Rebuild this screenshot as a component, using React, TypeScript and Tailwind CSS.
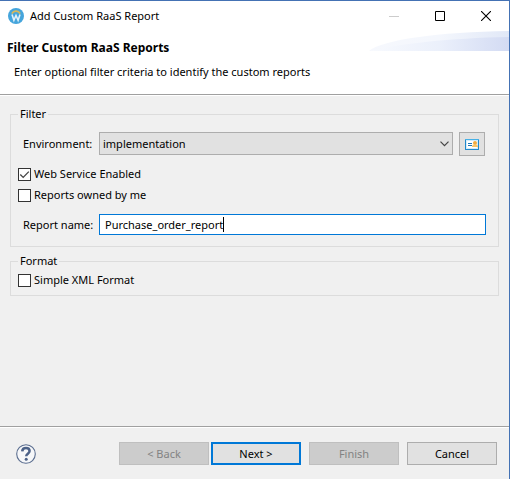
import React, { useState } from 'react'

function AppIcon() {
  return (
    <svg className="size-4" viewBox="0 0 16 16" aria-hidden="true">
      <circle cx="8" cy="8" r="8" fill="#45a5dc" />
      <path d="M3.900 5.600a4.600 4.600 0 0 1 8.200 0" fill="none" stroke="#d9b95c" strokeWidth="1.600" />
      <path d="M4 6.600l1.900 5.600L8 7.400l2.100 4.800L12 6.600" fill="none" stroke="#e4f2fa" strokeWidth="1.600" />
    </svg>
  )
}

function HeaderSwoosh() {
  return (
    <svg className="absolute right-0 top-0 h-5 w-[140px]" viewBox="0 0 140 20" preserveAspectRatio="none" aria-hidden="true">
      <defs>
        <linearGradient id="outer" x1="0" x2="1">
          <stop offset="0" stopColor="#f6f8fd" />
          <stop offset="0.5" stopColor="#f4f7fd" />
          <stop offset="1" stopColor="#e1e8f7" />
        </linearGradient>
        <linearGradient id="inner" x1="0" x2="1">
          <stop offset="0" stopColor="#f8fafe" />
          <stop offset="0.5" stopColor="#ebf0fb" />
          <stop offset="1" stopColor="#d3dbf3" />
        </linearGradient>
      </defs>
      <path d="M0 20C12 9 70 1 140 0v20z" fill="url(#outer)" />
      <path d="M0 20C30 13 80 7 140 6v14z" fill="url(#inner)" />
    </svg>
  )
}

function CardIcon() {
  return (
    <svg className="h-[11px] w-[14px]" viewBox="0 0 14 11" aria-hidden="true">
      <rect width="14" height="11" rx="0.5" fill="#2088cc" />
      <path d="M0 0h14v1H0z" fill="#45b0e6" />
      <path d="M1 1h12v9H1z" fill="#d4ecfa" />
      <path d="M2 2h10v7H2z" fill="#fff" />
      <path d="M3 4.500h4M3 6.500h4" stroke="#1d76b8" />
      <circle cx="10" cy="4" r="2" fill="#f0aa40" />
      <path d="M7 8c0-2 1.200-2.500 3-2.500S13 6 13 8z" fill="#f8c468" />
    </svg>
  )
}

type CheckProps = { id: string; label: string; checked: boolean; onChange: (v: boolean) => void }

function Check({ id, label, checked, onChange }: CheckProps) {
  return (
    <div className="flex h-4 items-center gap-[3px]">
      <span className="relative flex size-[13px]">
        <input
          id={id}
          type="checkbox"
          checked={checked}
          onChange={(e) => onChange(e.target.checked)}
          className="size-[13px] appearance-none border border-[#333] bg-white"
        />
        {checked && (
          <svg className="pointer-events-none absolute inset-0 size-[13px]" viewBox="0 0 13 13" aria-hidden="true">
            <path d="M2.300 6.500l2.900 2.900 5.600-5.800" fill="none" stroke="#444" strokeWidth="1.300" />
          </svg>
        )}
      </span>
      <label htmlFor={id}>{label}</label>
    </div>
  )
}

const wizardButton = 'h-[23px] w-[90px] border border-[#adadad] bg-[#e1e1e1] disabled:border-[#bfbfbf] disabled:bg-[#cccccc] disabled:text-[#838383]'

export default function App() {
  const [env, setEnv] = useState('implementation')
  const [webService, setWebService] = useState(true)
  const [owned, setOwned] = useState(false)
  const [simpleXml, setSimpleXml] = useState(false)
  const [name, setName] = useState('Purchase_order_report')

  return (
    <div className="flex min-h-screen flex-col border-r border-t border-[#4472b4] bg-[#f0f0f0] font-['Noto_Sans','Open_Sans',sans-serif] text-[11px] leading-4 text-black">
      <header className="border-b border-[#a0a0a0] bg-white">
        <div className="flex h-[30px] items-center pl-2">
          <AppIcon />
          <h1 className="ml-[6px] flex-1">Add Custom RaaS Report</h1>
          <button aria-label="Minimize" className="flex h-7 w-[46px] items-center justify-center">
            <svg className="size-[10px]" viewBox="0 0 10 10"><path d="M0 5.500h10" stroke="#ccc" /></svg>
          </button>
          <button aria-label="Maximize" className="flex h-7 w-[46px] items-center justify-center">
            <svg className="size-[10px]" viewBox="0 0 10 10"><path d="M.5.5h9v9h-9z" fill="none" stroke="#000" /></svg>
          </button>
          <button aria-label="Close" className="flex h-7 w-[46px] items-center justify-center">
            <svg className="size-[10px]" viewBox="0 0 10 10"><path d="M0 0l10 10M10 0L0 10" stroke="#000" strokeWidth="1.100" /></svg>
          </button>
        </div>
        <div className="relative h-[63px] pt-[9px]">
          <HeaderSwoosh />
          <h2 className="relative pl-[7px] text-[12px] font-bold">Filter Custom RaaS Reports</h2>
          <p className="pl-[14px] pt-2">Enter optional filter criteria to identify the custom reports</p>
        </div>
      </header>

      <main className="flex flex-1 flex-col gap-[6px] border-t border-white px-[10px] pt-[10px]">
        <fieldset className="border border-[#dcdcdc] px-[7px] pb-[11px]">
          <legend className="px-[2px]">Filter</legend>
          <div className="flex items-start pl-[5px] pr-[6px] pt-[10px]">
            <label htmlFor="env" className="w-[76px] pt-1">Environment:</label>
            <div className="relative flex-1">
              <select
                id="env"
                value={env}
                onChange={(e) => setEnv(e.target.value)}
                className="block h-[23px] w-full appearance-none border border-[#adadad] bg-[#e1e1e1] pl-[3px] pr-5"
              >
                <option>implementation</option>
              </select>
              <svg className="pointer-events-none absolute right-1 top-[9px] h-[6px] w-[9px]" viewBox="0 0 9 6" aria-hidden="true">
                <path d="M.5.7l4 4 4-4" fill="none" stroke="#444" strokeWidth="1.200" />
              </svg>
            </div>
            <button aria-label="Credentials" className="ml-[6px] flex h-6 w-[26px] items-center justify-center border border-[#adadad] bg-[#e1e1e1]">
              <CardIcon />
            </button>
          </div>
          <div className="flex flex-col gap-[5px] pb-[11px] pt-[10px]">
            <Check id="web" label="Web Service Enabled" checked={webService} onChange={setWebService} />
            <Check id="owned" label="Reports owned by me" checked={owned} onChange={setOwned} />
          </div>
          <div className="flex items-center px-[5px]">
            <label htmlFor="name" className="w-[76px] whitespace-nowrap">Report name:</label>
            <div className="relative flex min-w-0 flex-1">
              <input
                id="name"
                type="text"
                value={name}
                onChange={(e) => setName(e.target.value)}
                className="peer h-[21px] w-full border border-[#0078d7] bg-white px-[5px] outline-none"
              />
              <span className="pointer-events-none absolute left-[124px] top-[3px] h-[15px] w-px bg-black peer-focus:hidden" />
            </div>
          </div>
        </fieldset>

        <fieldset className="border border-[#dcdcdc] px-[7px] pb-[7px]">
          <legend className="px-[2px]">Format</legend>
          <div className="pt-[3px]">
            <Check id="xml" label="Simple XML Format" checked={simpleXml} onChange={setSimpleXml} />
          </div>
        </fieldset>
      </main>

      <footer className="border-t border-[#a0a0a0]">
        <div className="flex items-center border-t border-white py-[14px] pl-4 pr-3">
          <button aria-label="Help" className="mr-auto">
            <svg className="size-5" viewBox="0 0 20 20">
              <circle cx="10" cy="10" r="9.300" fill="#f6f7f9" stroke="#5a6d8f" strokeWidth="1.100" />
              <path d="M6.200 7.300C6.400 5 7.800 4 10 4c2.200 0 3.600 1.200 3.600 3 0 2.600-3.400 2.700-3.400 5.200" fill="none" stroke="#4d6288" strokeWidth="2.500" />
              <circle cx="10.200" cy="15.200" r="1.500" fill="#4d6288" />
            </svg>
          </button>
          <button disabled className={wizardButton}>&lt; Back</button>
          <button className="ml-[2px] h-[23px] w-[90px] border-2 border-[#0078d7] bg-[#e1e1e1]">Next &gt;</button>
          <button disabled className={wizardButton + ' ml-2'}>Finish</button>
          <button className={wizardButton + ' ml-2'}>Cancel</button>
        </div>
      </footer>
    </div>
  )
}
